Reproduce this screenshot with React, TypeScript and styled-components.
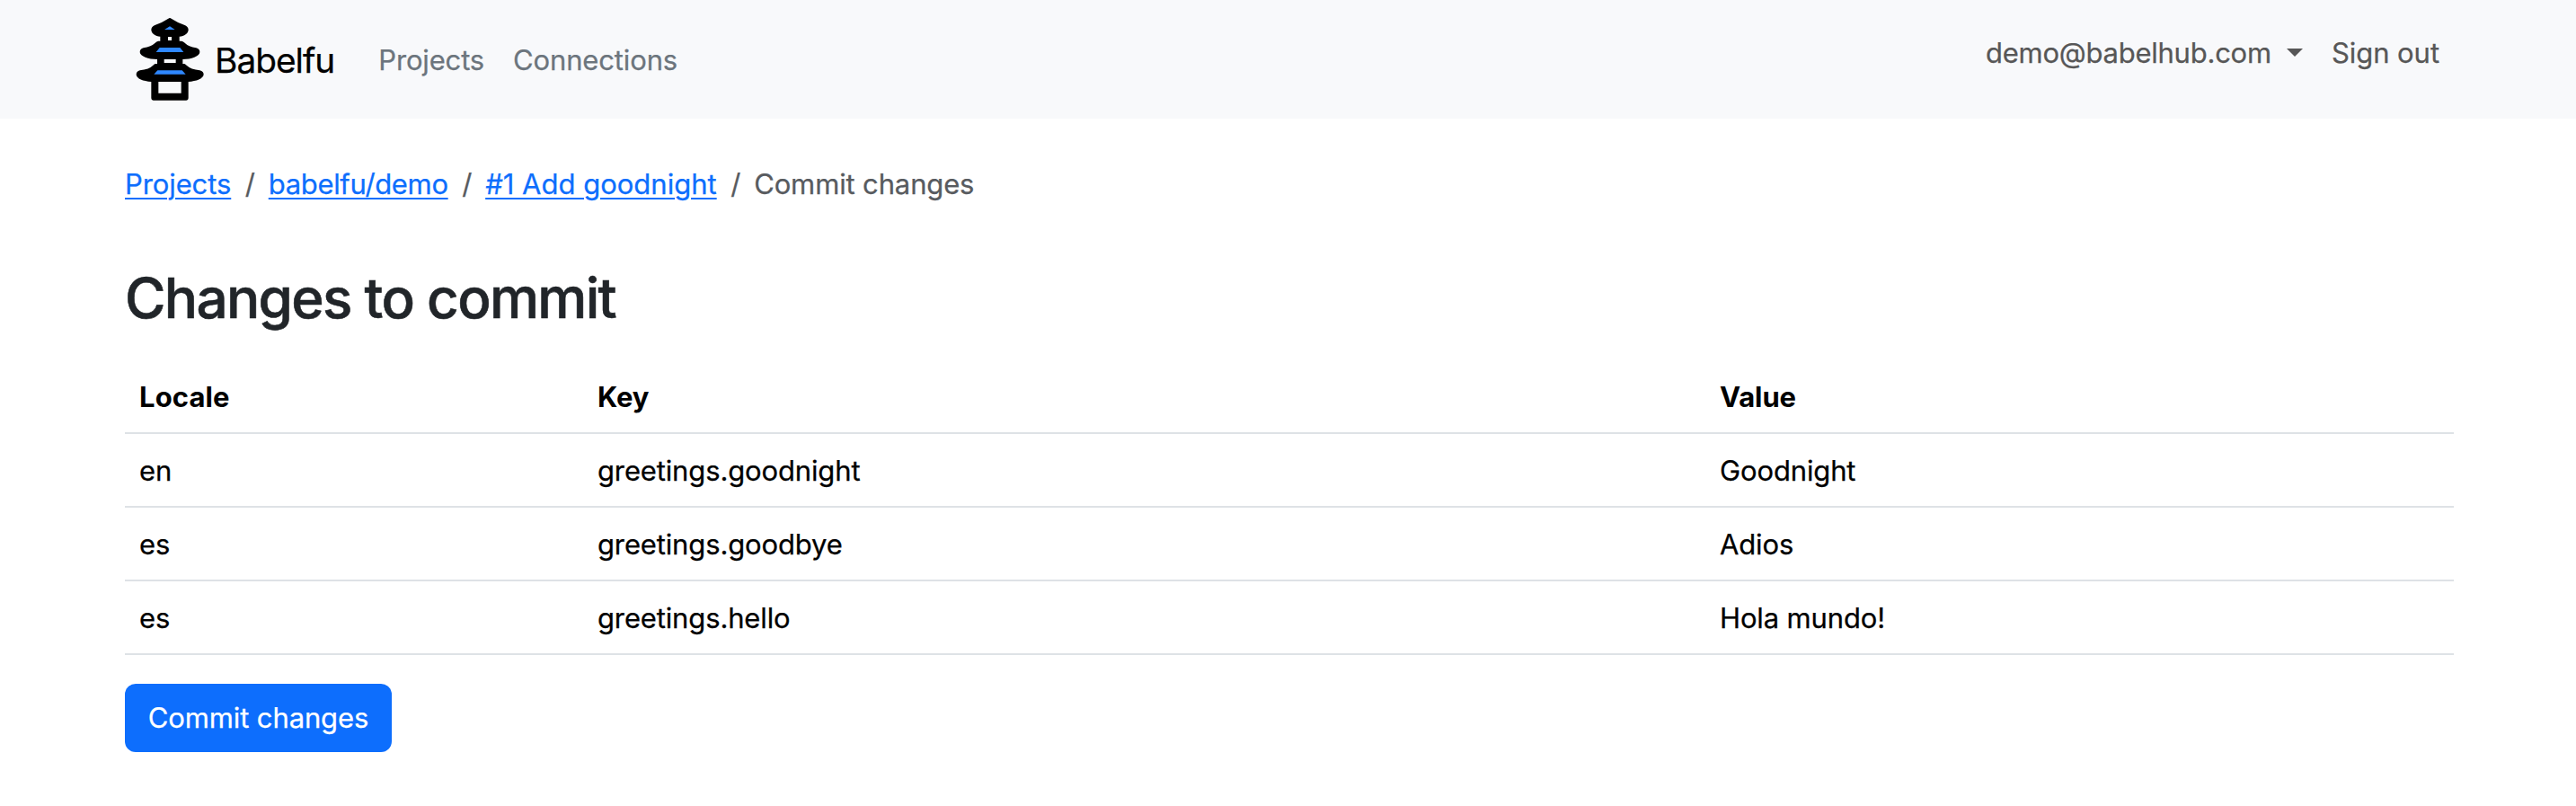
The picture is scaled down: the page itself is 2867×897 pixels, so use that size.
import React from 'react';
import styled, { createGlobalStyle } from 'styled-components';

const GlobalStyle = createGlobalStyle`
  *, *::before, *::after { box-sizing: border-box; }
  body {
    margin: 0;
    background: #fff;
    color: #212529;
    font-family: Inter, 'Liberation Sans', sans-serif;
    font-size: 31px;
    line-height: 48px;
    letter-spacing: -0.14px;
    -webkit-text-stroke: 0.25px currentColor;
  }
`;

const Navbar = styled.nav`
  display: flex;
  align-items: center;
  height: 132px;
  padding: 0 152px 0 145px;
  background: #f8f9fb;
`;

const Brand = styled.a`
  display: flex;
  align-items: center;
  color: #000;
  text-decoration: none;
`;

const Logo = styled.svg`
  display: block;
  width: 90px;
  height: 100px;
  margin-top: -2px;
`;

const BrandName = styled.span`
  margin: 1px 0 0 4px;
  font-size: 38.8px;
  line-height: 60px;
  letter-spacing: -1px;
`;

const NavList = styled.div<{ $end?: boolean }>`
  display: flex;
  gap: 32px;
  margin: ${p => (p.$end ? '0 0 14px auto' : '2px 0 0 49px')};
`;

const NavLink = styled.a<{ $muted?: boolean; $tracking?: number }>`
  display: flex;
  align-items: center;
  color: ${p => (p.$muted ? '#6c757d' : '#575757')};
  text-decoration: none;
  letter-spacing: ${p => p.$tracking ?? -0.15}px;
`;

const Caret = styled.span`
  margin: -2px 0 0 17px;
  border: 9px solid transparent;
  border-top-color: currentColor;
  border-bottom: 0;
`;

const Main = styled.main`
  width: 2592px;
  margin: 49px 0 0 139px;
`;

const Breadcrumb = styled.nav`
  display: flex;
  color: #585b5f;
`;

const Crumb = styled.span<{ $tracking?: number }>`
  display: flex;
  letter-spacing: ${p => p.$tracking ?? -0.14}px;

  &:not(:first-child)::before {
    content: '/';
    width: 10px;
    margin: 0 16px 0 15.5px;
    letter-spacing: 0;
  }
`;

const CrumbLink = styled.a`
  color: #0d6efd;
  text-decoration: underline;
  text-decoration-thickness: 2px;
  text-underline-offset: 4px;
`;

const Heading = styled.h2`
  margin: 64px 0 31px;
  font-size: 62px;
  font-weight: 500;
  line-height: 77px;
  letter-spacing: -1.68px;
  -webkit-text-stroke-width: 0.6px;
`;

const Table = styled.table`
  width: 100%;
  margin-bottom: 32px;
  border-collapse: separate;
  border-spacing: 0;
  table-layout: fixed;
  color: #000;
`;

const Column = styled.col<{ $width?: number }>`
  width: ${p => (p.$width ? `${p.$width}px` : 'auto')};
`;

const HeaderCell = styled.th<{ $tracking?: number }>`
  padding: 17px 16px 15px;
  border-bottom: 2px solid #dee2e6;
  font-weight: 700;
  text-align: left;
  letter-spacing: ${p => p.$tracking ?? 0}px;
  -webkit-text-stroke-width: 0;
`;

const Cell = styled.td`
  padding: 17px 16px 15px;
  border-bottom: 2px solid #dee2e6;
`;

const SubmitButton = styled.button`
  display: block;
  width: 297px;
  height: 76px;
  padding: 0;
  border: 0;
  border-radius: 12px;
  background: #0d6efd;
  color: #fff;
  font: inherit;
  letter-spacing: -0.12px;
`;

const changes = [
  { locale: 'en', key: 'greetings.goodnight', value: 'Goodnight' },
  { locale: 'es', key: 'greetings.goodbye', value: 'Adios' },
  { locale: 'es', key: 'greetings.hello', value: 'Hola mundo!' },
];

function Pagoda() {
  return (
    <Logo viewBox="0 0 270 300" aria-hidden="true">
      <path
        fill="#000"
        fillRule="evenodd"
        d="M127 17Q132 13 137 17Q155 29 180 38Q194 43 194 54C194 67 180 76 164 77V92H170Q176 92 180 97Q195 112 220 115Q232 118 232 129C231 143 204 153 175 153V168H179Q183 168 186 172Q203 188 232 190Q245 193 245 204C243 218 221 226 194 228V283Q194 290 187 290H77Q70 290 70 283V228C43 226 21 218 20 204Q20 193 32 190Q62 188 78 172Q81 168 85 168H90V153C60 153 33 143 32 129Q32 118 44 115Q69 112 85 97Q89 92 94 92H100V77C84 76 70 67 70 54Q70 43 84 38Q109 29 127 17ZM126 78V90H138V78ZM113 153V165H152V153ZM94 228V266H170V228Z"
      />
      <path fill="#2f88ff" d="M132 43L149 54H114ZM98 114H166L178 129H86ZM91 190H173L185 203H79Z" />
    </Logo>
  );
}

export default function App() {
  return (
    <>
      <GlobalStyle />
      <Navbar>
        <Brand>
          <Pagoda />
          <BrandName>Babelfu</BrandName>
        </Brand>
        <NavList>
          <NavLink $muted>Projects</NavLink>
          <NavLink $muted>Connections</NavLink>
        </NavList>
        <NavList $end>
          <NavLink $tracking={-0.24}>
            demo@babelhub.com
            <Caret />
          </NavLink>
          <NavLink $tracking={-0.05}>Sign out</NavLink>
        </NavList>
      </Navbar>
      <Main>
        <Breadcrumb>
          <Crumb $tracking={-0.1}>
            <CrumbLink>Projects</CrumbLink>
          </Crumb>
          <Crumb $tracking={-0.34}>
            <CrumbLink>babelfu/demo</CrumbLink>
          </Crumb>
          <Crumb $tracking={0}>
            <CrumbLink>#1 Add goodnight</CrumbLink>
          </Crumb>
          <Crumb>Commit changes</Crumb>
        </Breadcrumb>
        <Heading>Changes to commit</Heading>
        <Table>
          <colgroup>
            <Column $width={510} />
            <Column $width={1249} />
            <Column />
          </colgroup>
          <thead>
            <tr>
              <HeaderCell $tracking={0.1}>Locale</HeaderCell>
              <HeaderCell $tracking={-0.1}>Key</HeaderCell>
              <HeaderCell $tracking={-0.1}>Value</HeaderCell>
            </tr>
          </thead>
          <tbody>
            {changes.map(change => (
              <tr key={change.key}>
                <Cell>{change.locale}</Cell>
                <Cell>{change.key}</Cell>
                <Cell>{change.value}</Cell>
              </tr>
            ))}
          </tbody>
        </Table>
        <SubmitButton>Commit changes</SubmitButton>
      </Main>
    </>
  );
}
